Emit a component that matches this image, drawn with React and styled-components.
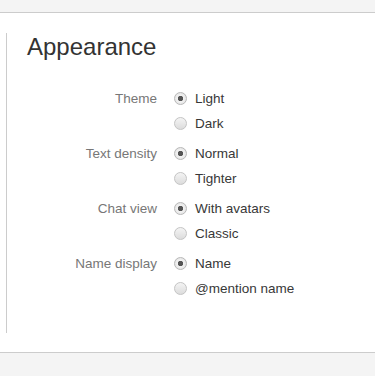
import React, { useState } from 'react';
import styled, { createGlobalStyle } from 'styled-components';

const GlobalStyle = createGlobalStyle`
  html, body {
    margin: 0;
    padding: 0;
    background: #f4f4f4;
    font-family: 'Liberation Sans', Arial, sans-serif;
  }
`;

export const TopBar = styled.div`
  height: 12px;
  background: #f4f4f4;
  border-bottom: 1px solid #cccccc;
`;

export const Main = styled.div`
  background: #ffffff;
  height: 340px;
  padding-top: 20px;
  box-sizing: border-box;
  border-bottom: 1px solid #cccccc;
`;

export const Panel = styled.section`
  margin-left: 6px;
  height: 300px;
  border-left: 1px solid #cccccc;
  padding-left: 20px;
  box-sizing: border-box;
`;

export const Title = styled.h2`
  margin: 0 0 25px;
  font-size: 24px;
  line-height: 28px;
  font-weight: 400;
  color: #333333;
`;

export const Groups = styled.div`
  display: flex;
  flex-direction: column;
  gap: 5px;
`;

export const Group = styled.div`
  display: grid;
  grid-template-columns: 130px 1fr;
  column-gap: 17px;
`;

export const Label = styled.div`
  text-align: right;
  font-size: 13.5px;
  line-height: 25px;
  color: #777777;
`;

export const Options = styled.div`
  display: flex;
  flex-direction: column;
`;

export const Option = styled.label`
  display: flex;
  align-items: center;
  gap: 8px;
  height: 25px;
  font-size: 13.5px;
  color: #383838;
  cursor: pointer;
`;

export const Radio = styled.input`
  appearance: none;
  margin: 0;
  width: 13px;
  height: 13px;
  border-radius: 50%;
  border: 1px solid #c4c4c4;
  box-sizing: border-box;
  background: linear-gradient(#f4f4f4, #dcdcdc);
  cursor: pointer;

  &:checked {
    background: radial-gradient(circle, #555555 0 2.4px, #f2f2f2 3px, #dddddd 100%);
    border-color: #b8b8b8;
  }
`;

const settings = [
  { key: 'theme', label: 'Theme', options: ['Light', 'Dark'] },
  { key: 'density', label: 'Text density', options: ['Normal', 'Tighter'] },
  { key: 'chat', label: 'Chat view', options: ['With avatars', 'Classic'] },
  { key: 'name', label: 'Name display', options: ['Name', '@mention name'] },
];

export default function App() {
  const [values, setValues] = useState({
    theme: 'Light',
    density: 'Normal',
    chat: 'With avatars',
    name: 'Name',
  });

  return (
    <>
      <GlobalStyle />
      <TopBar />
      <Main>
        <Panel>
          <Title>Appearance</Title>
          <Groups>
            {settings.map((s) => (
              <Group key={s.key}>
                <Label>{s.label}</Label>
                <Options>
                  {s.options.map((o) => (
                    <Option key={o}>
                      <Radio
                        type="radio"
                        name={s.key}
                        checked={values[s.key] === o}
                        onChange={() => setValues({ ...values, [s.key]: o })}
                      />
                      {o}
                    </Option>
                  ))}
                </Options>
              </Group>
            ))}
          </Groups>
        </Panel>
      </Main>
    </>
  );
}
